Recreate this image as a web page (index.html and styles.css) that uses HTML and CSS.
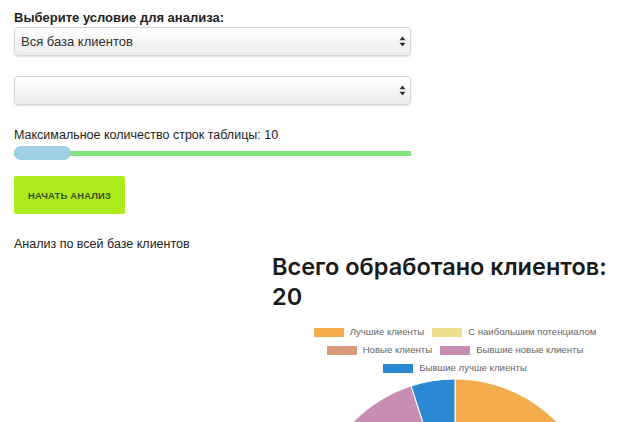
FILE: index.html
```html
<!DOCTYPE html>
<html lang="ru">
<head>
<meta charset="utf-8">
<link rel="stylesheet" href="styles.css">
</head>
<body>
<div class="page">
  <div class="controls">
    <div class="label-bold">Выберите условие для анализа:</div>
    <div class="select">
      <span class="select-text">Вся база клиентов</span>
      <svg class="arrows" width="7" height="11" viewBox="0 0 7 11"><path d="M3.5 0.5 L6.5 4.2 H0.5 Z M3.5 10.5 L6.5 6.8 H0.5 Z" fill="#333"/></svg>
    </div>
    <div class="select second">
      <span class="select-text"></span>
      <svg class="arrows" width="7" height="11" viewBox="0 0 7 11"><path d="M3.5 0.5 L6.5 4.2 H0.5 Z M3.5 10.5 L6.5 6.8 H0.5 Z" fill="#333"/></svg>
    </div>
    <div class="label">Максимальное количество строк таблицы: 10</div>
    <div class="slider">
      <div class="track"></div>
      <div class="thumb"></div>
    </div>
    <button class="start">НАЧАТЬ АНАЛИЗ</button>
    <div class="result-caption">Анализ по всей базе клиентов</div>
  </div>
  <div class="result">
    <div class="spacer"></div>
    <div class="chart-col">
      <h2 class="total">Всего обработано клиентов: 20</h2>
      <div class="legend">
        <div class="legend-row">
          <span class="item"><span class="box c-orange"></span>Лучшие клиенты</span>
          <span class="item"><span class="box c-yellow"></span>С наибольшим потенциалом</span>
        </div>
        <div class="legend-row">
          <span class="item"><span class="box c-salmon"></span>Новые клиенты</span>
          <span class="item"><span class="box c-pink"></span>Бывшие новые клиенты</span>
        </div>
        <div class="legend-row">
          <span class="item"><span class="box c-blue"></span>Бывшие лучше клиенты</span>
        </div>
      </div>
      <svg class="pie" width="369" height="60" viewBox="0 0 369 60">
        <path d="M183,144 L183,2 A142,142 0 0 1 318.05,187.88 Z" fill="#f3ab4b" stroke="#fff" stroke-width="1"/>
        <path d="M183,144 L318.05,187.88 A142,142 0 0 1 183,286 Z" fill="#ece08e" stroke="#fff" stroke-width="1"/>
        <path d="M183,144 L183,286 A142,142 0 0 1 68.12,227.47 Z" fill="#d99a7c" stroke="#fff" stroke-width="1"/>
        <path d="M183,144 L68.12,227.47 A142,142 0 0 1 139.12,8.94 Z" fill="#c78db3" stroke="#fff" stroke-width="1"/>
        <path d="M183,144 L139.12,8.94 A142,142 0 0 1 183,2 Z" fill="#2b88d2" stroke="#fff" stroke-width="1"/>
      </svg>
    </div>
  </div>
</div>
</body>
</html>
```
FILE: styles.css
```css
html, body {
  margin: 0;
  padding: 0;
  background: #fff;
  overflow: hidden;
}
body {
  font-family: "Liberation Sans", Arial, sans-serif;
  color: #222;
}
.page {
  padding: 10px 0 0 14px;
}
.controls {
  width: 397px;
  display: flex;
  flex-direction: column;
  align-items: flex-start;
}
.label-bold {
  font-weight: bold;
  font-size: 13px;
  line-height: 16px;
  color: #222;
}
.select {
  position: relative;
  box-sizing: border-box;
  width: 397px;
  height: 29px;
  margin-top: 1px;
  border: 1px solid #d6d6d6;
  border-radius: 4px;
  background: linear-gradient(#ffffff, #ececec);
  box-shadow: 0 1px 2px rgba(0,0,0,0.12);
  display: flex;
  align-items: center;
  padding-left: 6px;
}
.select.second {
  margin-top: 20px;
}
.select-text {
  font-size: 13px;
  color: #333;
}
.arrows {
  position: absolute;
  right: 4px;
  top: 8px;
}
.label {
  margin-top: 22px;
  font-size: 12.5px;
  line-height: 16px;
  color: #222;
}
.slider {
  position: relative;
  width: 397px;
  height: 14px;
  margin-top: 3px;
}
.track {
  position: absolute;
  left: 0;
  right: 0;
  top: 5px;
  height: 5px;
  background: #7fe67c;
}
.thumb {
  position: absolute;
  left: 0;
  top: 0;
  width: 57px;
  height: 14px;
  border-radius: 7px;
  background: #9ecfe2;
}
.start {
  margin-top: 16px;
  width: 111px;
  height: 38px;
  border: none;
  border-radius: 2px;
  background: #aeeb1c;
  color: #3b4f1e;
  font-family: "Liberation Sans", Arial, sans-serif;
  font-weight: bold;
  font-size: 9.4px;
  letter-spacing: 0.2px;
  padding: 0;
}
.result-caption {
  margin-top: 22px;
  font-size: 12.5px;
  line-height: 16px;
  color: #222;
}
.result {
  display: flex;
}
.spacer {
  width: 258px;
  flex: none;
}
.chart-col {
  width: 369px;
  flex: none;
  display: flex;
  flex-direction: column;
}
.total {
  margin: 0;
  max-width: 350px;
  font-family: Inter, "Liberation Sans", sans-serif;
  font-weight: 600;
  font-size: 23.5px;
  line-height: 30px;
  color: #1a1a1a;
}
.legend {
  margin-top: 13px;
  display: flex;
  flex-direction: column;
  gap: 4px;
}
.legend-row {
  display: flex;
  justify-content: center;
  gap: 8px;
  padding-right: 3px;
}
.item {
  display: flex;
  align-items: center;
  font-size: 9.6px;
  line-height: 14px;
  color: #666;
}
.box {
  width: 30px;
  height: 9px;
  margin-right: 6px;
}
.c-orange { background: #f3ab4b; }
.c-yellow { background: #ece08e; }
.c-salmon { background: #d99a7c; }
.c-pink { background: #c78db3; }
.c-blue { background: #2b88d2; }
.pie {
  display: block;
  margin-top: 2px;
}
```
